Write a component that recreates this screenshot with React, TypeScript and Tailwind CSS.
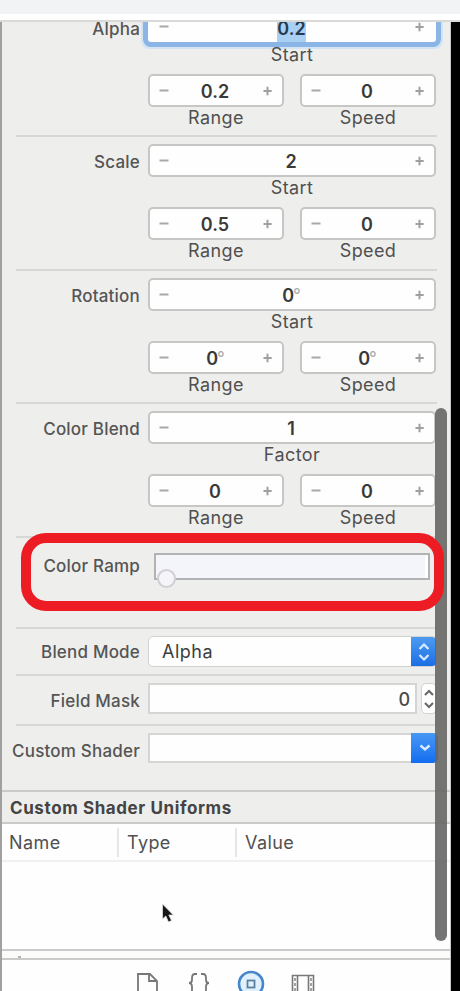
import React from "react";

const font = "font-['Inter','Liberation_Sans',sans-serif]";

function Plus() {
  return (
    <svg width="10" height="10" viewBox="0 0 10 10" className="shrink-0">
      <path d="M5.500 .8v8.400M1.500 5h8.200" stroke="#a0a0a0" strokeWidth="2" />
    </svg>
  );
}

function Minus() {
  return (
    <svg width="10" height="10" viewBox="0 0 10 10" className="shrink-0">
      <path d="M.5 4.500h9" stroke="#a8a8a8" strokeWidth="2" />
    </svg>
  );
}

type StepperProps = { value: string; caption: string; degree?: boolean; focused?: boolean };

function Stepper({ value, caption, degree, focused }: StepperProps) {
  return (
    <div className="flex min-w-0 flex-1 flex-col">
      <div
        className={
          focused
            ? "mb-0.5 flex h-[31px] items-center justify-between rounded-[3px] bg-[#fefefe] pl-[11px] pr-3 shadow-[0_0_0_5px_#8bb5e5,0_0_0_7px_#d3e4f4]"
            : "flex h-[33px] items-center justify-between rounded-[5px] border-2 border-[#c6c6c4] bg-[#fefefe] pl-[9px] pr-2.5"
        }
      >
        <Minus />
        <span className="flex h-full items-center pt-0.5 text-[18px] font-semibold text-[#3a3a3a]">
          <span className={focused ? "bg-[#a9cff3] pt-0.5 leading-[26px] text-[#253a50]" : "mr-px"}>{value}</span>
          {degree && <span className="-ml-0.5 text-[17px] font-normal text-[#aaa]">°</span>}
        </span>
        <Plus />
      </div>
      <div className="h-[22px] text-center text-[18px] leading-[22px] tracking-[0.4px] text-[#505050]">{caption}</div>
    </div>
  );
}

function Label({ children }: { children: React.ReactNode }) {
  return (
    <div className="w-[140px] shrink-0 whitespace-nowrap text-right text-[17px] font-medium tracking-[0.2px] text-[#555]">
      {children}
    </div>
  );
}

function Rule() {
  return <div className="ml-4 mr-[13px] h-0.5 shrink-0 bg-[#d7d7d5]" />;
}

type GroupProps = {
  label: string;
  main: string;
  mainCaption: string;
  range: string;
  speed: string;
  degree?: boolean;
  focused?: boolean;
  tall?: boolean;
};

function Group({ label, main, mainCaption, range, speed, degree, focused, tall }: GroupProps) {
  return (
    <section className={tall ? "flex h-[134px] shrink-0 flex-col" : "flex h-[133px] shrink-0 flex-col"}>
      <Rule />
      <div className="mt-[7px] flex h-[56px] pr-[14px]">
        <div className="flex h-[38px] items-center">
          <Label>{label}</Label>
        </div>
        <div className="ml-2 flex flex-1">
          <Stepper value={main} caption={mainCaption} degree={degree} focused={focused} />
        </div>
      </div>
      <div className="mt-[7px] flex gap-4 pl-[148px] pr-[14px]">
        <Stepper value={range} caption="Range" degree={degree} />
        <Stepper value={speed} caption="Speed" degree={degree} />
      </div>
    </section>
  );
}

function BottomBar() {
  return (
    <svg width="448" height="31" viewBox="0 960 448 31" fill="none" className="block">
      <g stroke="#777" strokeWidth="1.8">
        <path d="M138 995V974h12l7 7v14M149 974v7h8" />
        <path d="M197 974h-2q-3 0-3 4v2q0 3-3 3 3 0 3 4v8M201 974h2q3 0 3 4v2q0 3 3 3-3 0-3 4v8" />
        <path d="M292.500 995V975.500h21V995M297.500 976v19M308.500 976v19" strokeWidth="1.600" />
        <path d="M295 978v17M311 978v17" strokeDasharray="3 2" stroke="#999" />
      </g>
      <circle cx="251" cy="984" r="12" stroke="#4687cb" strokeWidth="2.600" fill="#e0f1fd" />
      <rect x="247.500" y="980.500" width="7" height="7" stroke="#5c7f9e" strokeWidth="1.800" />
    </svg>
  );
}

export default function App() {
  return (
    <div className={`relative flex h-[991px] w-[460px] flex-col overflow-hidden bg-white ${font}`}>
      <div className="h-3.5 shrink-0 bg-[#f1f3f5]" />
      <div className="h-1.5 shrink-0 bg-white" />
      <div className="h-0.5 shrink-0 bg-[#d9dad8]" />
      <div className="flex min-h-0 flex-1 bg-black">
        <div className="flex w-[451px] flex-col overflow-hidden border-r border-[#c9c9c9] bg-[#eeeeec]">
          <div className="-mt-5 flex flex-col">
            <Group label="Alpha" main="0.2" mainCaption="Start" range="0.2" speed="0" focused />
            <Group label="Scale" main="2" mainCaption="Start" range="0.5" speed="0" tall />
            <Group label="Rotation" main="0" mainCaption="Start" range="0" speed="0" degree />
            <Group label="Color Blend" main="1" mainCaption="Factor" range="0" speed="0" tall />
          </div>

          <section className="flex h-[91px] shrink-0 flex-col">
            <Rule />
            <div className="mt-[15px] flex h-[27px] pr-5">
              <div className="pt-px">
                <Label>Color Ramp</Label>
              </div>
              <div className="relative ml-3.5 flex-1 border-2 border-[#b1b2b3] bg-[#f4f5fa]">
                <div className="ml-auto h-full w-[3px] bg-white" />
                <span className="absolute left-[1px] top-[14px] size-[19px] rounded-full border-2 border-[#d0d0d4] bg-[#f4f4f9]" />
              </div>
            </div>
          </section>

          <section className="flex h-[47px] shrink-0 flex-col">
            <Rule />
            <div className="mt-[7px] flex h-[31px] items-center pr-[13px]">
              <div className="pt-0.5">
                <Label>Blend Mode</Label>
              </div>
              <div className="ml-2 flex h-[31px] flex-1 items-center overflow-hidden rounded-[5px] border border-[#d2d2d0] bg-[#fefefe] pl-[13px]">
                <span className="flex-1 text-[18px] tracking-[0.5px] text-[#3d3d3d]">Alpha</span>
                <span className="flex h-full w-[25px] items-center justify-center bg-linear-to-b from-[#4d9bf0] to-[#1a6fe4]">
                  <svg width="14" height="20" viewBox="0 0 14 20" fill="none" stroke="#d9ebff" strokeWidth="2.200">
                    <path d="M2.500 7 7 2.500 11.500 7M2.500 13 7 17.500 11.500 13" />
                  </svg>
                </span>
              </div>
            </div>
          </section>

          <section className="flex h-[50px] shrink-0 flex-col">
            <Rule />
            <div className="mt-[7px] flex h-[31px] items-center pr-[13px]">
              <div className="pt-1.5">
                <Label>Field Mask</Label>
              </div>
              <div className="ml-2 flex h-[31px] w-[269px] items-center justify-end border-2 border-[#d5d5d3] bg-[#fefefe] pr-[5px]">
                <span className="pt-0.5 text-[18px] font-medium text-[#4a4a4a]">0</span>
              </div>
              <div className="ml-1 flex h-[31px] w-4 items-center justify-center rounded-[5px] border border-[#d2d2d0] bg-[#fefefe]">
                <svg width="12" height="22" viewBox="0 0 12 22" fill="none" stroke="#666" strokeWidth="2">
                  <path d="M2 7 6 3l4 4M2 15l4 4 4-4" />
                </svg>
              </div>
            </div>
          </section>

          <section className="flex h-[66px] shrink-0 flex-col">
            <Rule />
            <div className="mt-[6px] flex h-[31px] items-center pr-3">
              <div className="pt-2">
                <Label>Custom Shader</Label>
              </div>
              <div className="ml-2 flex h-[30px] flex-1 border-2 border-r-0 border-[#d5d5d3] bg-[#fefefe]">
                <span className="-my-0.5 ml-auto flex w-[27px] items-center justify-center rounded-r-[5px] bg-linear-to-b from-[#4898f4] to-[#126cf0]">
                  <svg width="14" height="10" viewBox="0 0 14 10" fill="none" stroke="#d9ebff" strokeWidth="2.400">
                    <path d="m2.500 2.500 4.500 4 4.500-4" />
                  </svg>
                </span>
              </div>
            </div>
          </section>

          <div className="flex h-[34px] shrink-0 items-center border-y-2 border-[#cacac8] pl-[10px] pt-1 text-[17px] font-bold tracking-[0.6px] text-[#444]">
            Custom Shader Uniforms
          </div>
          <div className="flex h-[38px] shrink-0 items-center border-b-2 border-[#f0f0ee] bg-[#fefefe] text-[18px] tracking-[0.4px] text-[#505050]">
            <div className="flex h-[29px] w-[119px] items-center border-r-2 border-[#e6e6e4] pl-[9px]">Name</div>
            <div className="flex h-[29px] w-[118px] items-center border-r-2 border-[#e6e6e4] pl-2">Type</div>
            <div className="pl-2">Value</div>
          </div>
          <div className="flex-1 bg-[#fefefe]" />
          <div className="h-[11px] shrink-0 border-y-2 border-[#cacac9] bg-[#fbfbfa]">
            <div className="ml-[18px] mt-[5px] h-0.5 w-[3px] bg-[#b5b5b5]" />
          </div>
          <div className="h-[31px] shrink-0 bg-[#fefefe]">
            <BottomBar />
          </div>
        </div>
      </div>

      <div className="absolute bottom-0 left-0 top-[22px] w-0.5 bg-[#a0a0a0]" />
      <div className="absolute left-[435px] top-[408px] h-[533px] w-[12px] rounded-full bg-[#666]/90" />
      <div className="absolute left-[21px] top-[533px] h-[78px] w-[423px] rounded-[25px] border-[10px] border-[#ed1c24]" />
      <svg className="absolute left-[161px] top-[903px]" width="14" height="21" viewBox="0 0 14 21">
        <path d="M1.500 1v15l3.300-3 2.700 6 3-1.500-2.700-5.500h4.500z" fill="#171717" stroke="#ddd" strokeWidth=".8" />
      </svg>
    </div>
  );
}
